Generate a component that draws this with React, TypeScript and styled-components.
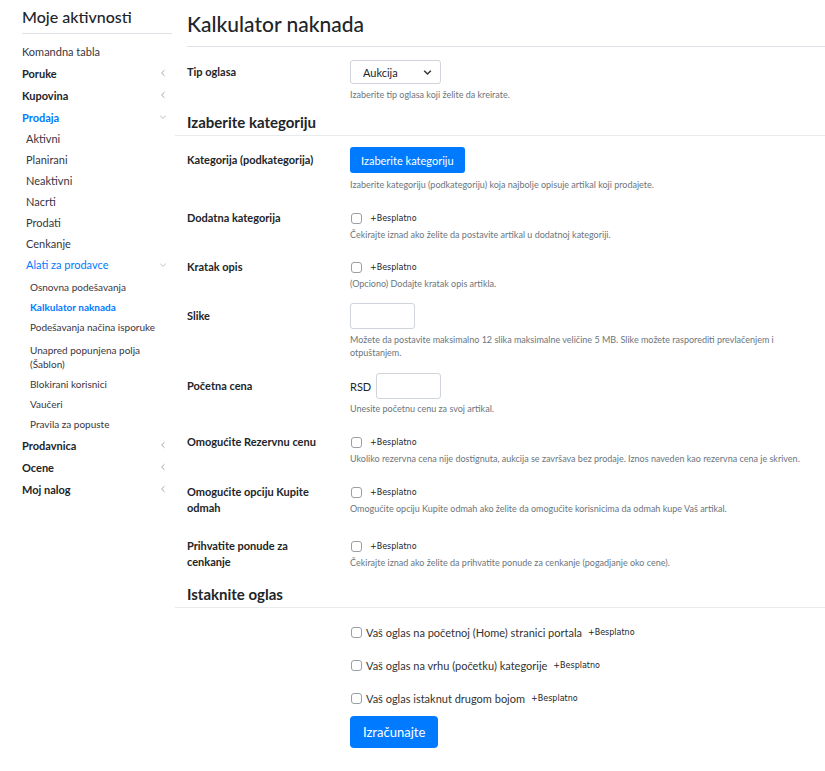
import { createGlobalStyle } from "styled-components";
import styled from "styled-components";

const GlobalStyle = createGlobalStyle`
  html, body {
    margin: 0;
    padding: 0;
    background: #ffffff;
  }
  body {
    font-family: Lato, "Noto Sans", "Liberation Sans", sans-serif;
    color: #212529;
  }
  * { box-sizing: border-box; }
`;

const BLUE = "#007bff";

const Page = styled.div`
  display: flex;
  align-items: flex-start;
  width: 825px;
`;

/* ---------- sidebar ---------- */

const Sidebar = styled.aside`
  width: 150px;
  margin-left: 22px;
  flex-shrink: 0;
`;

const SideTitle = styled.h2`
  margin: 0;
  height: 34px;
  padding-top: 7px;
  font-size: 16px;
  font-weight: 500;
  line-height: 20px;
  border-bottom: 1px solid #dee2e6;
  color: #212529;
`;

const SideList = styled.nav`
  padding-top: 6px;
`;

const TopItem = styled.div<{ $active?: boolean; $plain?: boolean }>`
  display: flex;
  justify-content: space-between;
  align-items: center;
  height: 22px;
  font-size: 11px;
  font-weight: ${(p) => (p.$plain ? 400 : 700)};
  color: ${(p) => (p.$active ? BLUE : p.$plain ? "#3a3540" : "#212529")};
`;

const SubItem = styled.div<{ $active?: boolean }>`
  display: flex;
  justify-content: space-between;
  align-items: center;
  height: 21px;
  padding-left: 4px;
  font-size: 11px;
  color: ${(p) => (p.$active ? BLUE : "#3a3540")};
`;

const SubSubList = styled.div`
  padding-top: 2px;
`;

const SubSubItem = styled.div<{ $active?: boolean; $pt?: number }>`
  padding: ${(p) => p.$pt ?? 3}px 0 3px 8px;
  font-size: 10px;
  line-height: 14px;
  font-weight: ${(p) => (p.$active ? 700 : 400)};
  color: ${(p) => (p.$active ? BLUE : "#3a3540")};
  width: 142px;
`;

const Chevron = styled.svg`
  width: 8px;
  height: 8px;
  margin-right: 5px;
  flex-shrink: 0;
`;

const ChevronLeft = () => (
  <Chevron viewBox="0 0 8 8">
    <path d="M5.5 1.2 L2.6 4 L5.5 6.8" fill="none" stroke="#a8a8ad" strokeWidth="1" />
  </Chevron>
);

const ChevronDown = () => (
  <Chevron viewBox="0 0 8 8">
    <path d="M1.2 2.8 L4 5.4 L6.8 2.8" fill="none" stroke="#b8b8bd" strokeWidth="0.9" />
  </Chevron>
);

/* ---------- main ---------- */

const Main = styled.main`
  flex: 1;
  margin-left: 3px;
`;

const PageTitle = styled.h1`
  margin: 0 0 0 12px;
  height: 47px;
  padding-top: 10px;
  font-size: 21px;
  font-weight: 500;
  line-height: 28px;
  border-bottom: 1px solid #dee2e6;
  color: #212529;
`;

const SectionTitle = styled.h3<{ $mt: number }>`
  margin: ${(p) => p.$mt}px 0 0 0;
  padding: 0 0 3px 12px;
  font-size: 15px;
  font-weight: 700;
  line-height: 20px;
  border-bottom: 1px solid #e9ecef;
  color: #212529;
`;

const Row = styled.div<{ $mt: number }>`
  display: grid;
  grid-template-columns: 163px 1fr;
  margin-top: ${(p) => p.$mt}px;
  padding-left: 12px;
  padding-right: 8px;
`;

const Label = styled.div<{ $pt: number }>`
  padding-top: ${(p) => p.$pt}px;
  padding-right: 20px;
  font-size: 11px;
  font-weight: 700;
  line-height: 16px;
  color: #212529;
`;

const Control = styled.div<{ $h: number }>`
  display: flex;
  align-items: center;
  min-height: ${(p) => p.$h}px;
`;

const Help = styled.div<{ $mt?: number }>`
  margin-top: ${(p) => p.$mt ?? 2}px;
  font-size: 9px;
  line-height: 13px;
  color: #6c757d;
`;

const SelectBox = styled.div`
  display: flex;
  align-items: center;
  justify-content: space-between;
  width: 91px;
  height: 24px;
  padding: 0 8px 0 12px;
  border: 1px solid #ced4da;
  border-radius: 3px;
  font-size: 11px;
  color: #212529;
`;

const Button = styled.button<{ $big?: boolean }>`
  display: inline-flex;
  align-items: center;
  justify-content: center;
  height: ${(p) => (p.$big ? 32 : 26)}px;
  padding: 0 ${(p) => (p.$big ? 13 : 11)}px;
  border: none;
  border-radius: ${(p) => (p.$big ? 4 : 3)}px;
  background: ${BLUE};
  color: #ffffff;
  font-family: inherit;
  font-size: ${(p) => (p.$big ? 13 : 11)}px;
  cursor: pointer;
`;

const TextInput = styled.div`
  width: 65px;
  height: 26px;
  border: 1px solid #ced4da;
  border-radius: 3px;
`;

const Currency = styled.span`
  font-size: 11px;
  margin-right: 5px;
  color: #212529;
`;

const Box = styled.span`
  display: inline-block;
  width: 11px;
  height: 11px;
  margin-left: 1px;
  border: 1px solid #9a9fa5;
  border-radius: 3px;
  background: #fff;
  flex-shrink: 0;
`;

const Free = styled.span<{ $ml?: number }>`
  margin-left: ${(p) => p.$ml ?? 8}px;
  font-family: "DejaVu Sans", "Liberation Sans", sans-serif;
  font-size: 8px;
  color: #212529;
`;

const PromoList = styled.div`
  padding-left: 175px;
  margin-top: 16px;
  display: flex;
  flex-direction: column;
  gap: 17px;
`;

const PromoRow = styled.label`
  display: flex;
  align-items: center;
  height: 16px;
  font-size: 11px;
  color: #333;
`;

const PromoText = styled.span`
  margin-left: 4px;
`;

const Footer = styled.div`
  padding-left: 175px;
  margin-top: 10px;
  padding-bottom: 20px;
`;

const CheckFree = () => (
  <>
    <Box />
    <Free>+Besplatno</Free>
  </>
);

type Field = {
  label: React.ReactNode;
  control: React.ReactNode;
  h: number;
  help: React.ReactNode;
  mt: number;
  hmt?: number;
};

const categoryFields: Field[] = [
  {
    label: "Kategorija (podkategorija)",
    control: <Button>Izaberite kategoriju</Button>,
    h: 26,
    help: "Izaberite kategoriju (podkategoriju) koja najbolje opisuje artikal koji prodajete.",
    mt: 11,
    hmt: 5,
  },
  {
    label: "Dodatna kategorija",
    control: <CheckFree />,
    h: 20,
    help: "Čekirajte iznad ako želite da postavite artikal u dodatnoj kategoriji.",
    mt: 17,
  },
  {
    label: "Kratak opis",
    control: <CheckFree />,
    h: 20,
    help: "(Opciono) Dodajte kratak opis artikla.",
    mt: 16,
  },
  {
    label: "Slike",
    control: <TextInput />,
    h: 26,
    help: (
      <>
        Možete da postavite maksimalno 12 slika maksimalne veličine 5 MB. Slike možete rasporediti prevlačenjem i
        otpuštanjem.
      </>
    ),
    mt: 13,
    hmt: 4,
  },
  {
    label: "Početna cena",
    control: (
      <>
        <Currency>RSD</Currency>
        <TextInput />
      </>
    ),
    h: 26,
    help: "Unesite početnu cenu za svoj artikal.",
    mt: 14,
    hmt: 3,
  },
  {
    label: "Omogućite Rezervnu cenu",
    control: <CheckFree />,
    h: 20,
    help: "Ukoliko rezervna cena nije dostignuta, aukcija se završava bez prodaje. Iznos naveden kao rezervna cena je skriven.",
    mt: 17,
  },
  {
    label: "Omogućite opciju Kupite odmah",
    control: <CheckFree />,
    h: 20,
    help: "Omogućite opciju Kupite odmah ako želite da omogućite korisnicima da odmah kupe Vaš artikal.",
    mt: 17,
  },
  {
    label: "Prihvatite ponude za cenkanje",
    control: <CheckFree />,
    h: 20,
    help: "Čekirajte iznad ako želite da prihvatite ponude za cenkanje (pogadjanje oko cene).",
    mt: 20,
  },
];

const promos = [
  "Vaš oglas na početnoj (Home) stranici portala",
  "Vaš oglas na vrhu (početku) kategorije",
  "Vaš oglas istaknut drugom bojom",
];

const sales = ["Aktivni", "Planirani", "Neaktivni", "Nacrti", "Prodati", "Cenkanje"];

const tools = [
  "Osnovna podešavanja",
  "Kalkulator naknada",
  "Podešavanja načina isporuke",
  "Unapred popunjena polja (Šablon)",
  "Blokirani korisnici",
  "Vaučeri",
  "Pravila za popuste",
];

const App = () => {
  return (
    <>
      <GlobalStyle />
      <Page>
        <Sidebar>
          <SideTitle>Moje aktivnosti</SideTitle>
          <SideList>
            <TopItem $plain>Komandna tabla</TopItem>
            <TopItem>
              Poruke <ChevronLeft />
            </TopItem>
            <TopItem>
              Kupovina <ChevronLeft />
            </TopItem>
            <TopItem $active>
              Prodaja <ChevronDown />
            </TopItem>
            {sales.map((s) => (
              <SubItem key={s}>{s}</SubItem>
            ))}
            <SubItem $active>
              Alati za prodavce <ChevronDown />
            </SubItem>
            <SubSubList>
              {tools.map((t) => (
                <SubSubItem key={t} $active={t === "Kalkulator naknada"} $pt={t.startsWith("Unapred") ? 6 : 3}>
                  {t}
                </SubSubItem>
              ))}
            </SubSubList>
            <TopItem>
              Prodavnica <ChevronLeft />
            </TopItem>
            <TopItem>
              Ocene <ChevronLeft />
            </TopItem>
            <TopItem>
              Moj nalog <ChevronLeft />
            </TopItem>
          </SideList>
        </Sidebar>

        <Main>
          <PageTitle>Kalkulator naknada</PageTitle>

          <Row $mt={13}>
            <Label $pt={4}>Tip oglasa</Label>
            <div>
              <Control $h={24}>
                <SelectBox>
                  Aukcija
                  <svg width="9" height="7" viewBox="0 0 9 7">
                    <path d="M1.2 1.8 L4.5 5 L7.8 1.8" fill="none" stroke="#343a40" strokeWidth="1.6" />
                  </svg>
                </SelectBox>
              </Control>
              <Help $mt={4}>Izaberite tip oglasa koji želite da kreirate.</Help>
            </div>
          </Row>

          <SectionTitle $mt={11}>Izaberite kategoriju</SectionTitle>

          {categoryFields.map((f, i) => (
            <Row key={i} $mt={f.mt}>
              <Label $pt={(f.h - 16) / 2}>{f.label}</Label>
              <div>
                <Control $h={f.h}>{f.control}</Control>
                <Help $mt={f.hmt ?? 0}>{f.help}</Help>
              </div>
            </Row>
          ))}

          <SectionTitle $mt={14}>Istaknite oglas</SectionTitle>

          <PromoList>
            {promos.map((p) => (
              <PromoRow key={p}>
                <Box />
                <PromoText>{p}</PromoText>
                <Free $ml={6}>+Besplatno</Free>
              </PromoRow>
            ))}
          </PromoList>

          <Footer>
            <Button $big>Izračunajte</Button>
          </Footer>
        </Main>
      </Page>
    </>
  );
};

export default App;
